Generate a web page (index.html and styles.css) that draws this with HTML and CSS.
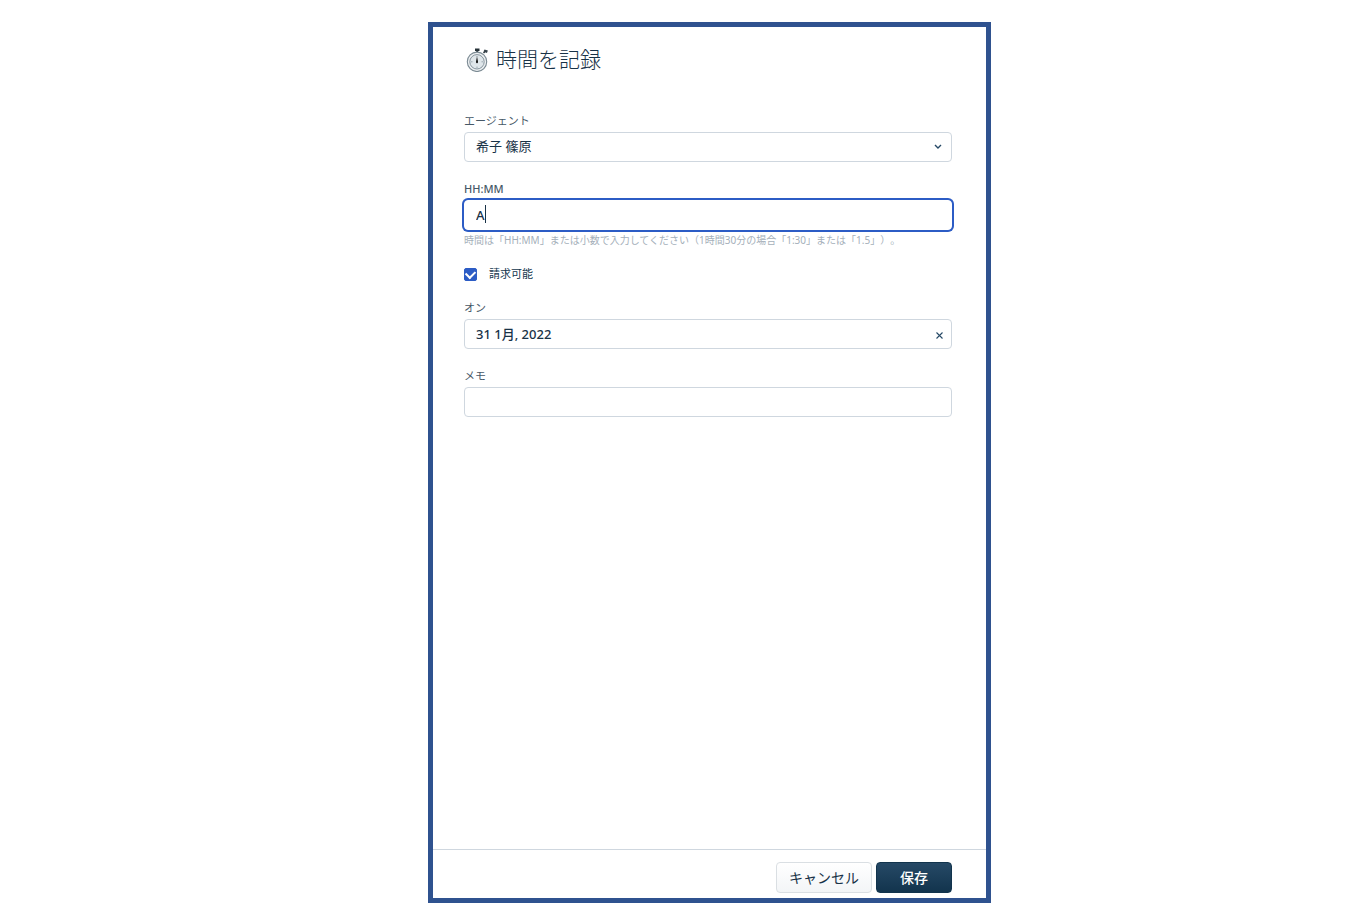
FILE: index.html
```html
<!DOCTYPE html>
<html lang="ja">
<head>
    <meta charset="UTF-8">
    <title>時間を記録</title>
    <link rel="stylesheet" href="styles.css">
</head>
<body>
    <form class="panel">
        <div class="content">
            <h1 class="title">
                <svg class="stopwatch" viewBox="0 0 24 26" width="24" height="26" aria-hidden="true">
                    <path d="M10 2.500h4.500V5h-1.300v2h-2V5H10z" fill="#263238"/>
                    <path d="M18.500 7l2-2" stroke="#263238" stroke-width="1.500"/>
                    <path d="M19.500 3.600l3.400 1-1 2.400-3.400-1.500z" fill="#37434a"/>
                    <circle cx="12" cy="15.800" r="9.700" fill="#eceff1" stroke="#7b8a93" stroke-width="1.100"/>
                    <circle cx="12" cy="15.800" r="7.200" fill="#dfe6ea" stroke="#87959e"/>
                    <path d="M12 10V11M12 20.500v1.500M6 15.800h1.500M16.500 15.800H18" stroke="#9aa7af"/>
                    <path d="M12 10.300l1 5.500a1 1.500 0 0 1-2 0z" fill="#111"/>
                </svg>
                <span>時間を記録</span>
            </h1>

            <div class="field">
                <label for="agent">エージェント</label>
                <div class="control">
                    <select class="input" id="agent">
                        <option>希子 篠原</option>
                    </select>
                    <svg class="chevron" viewBox="0 0 8 6" width="8" height="6" aria-hidden="true">
                        <path d="M1 1l3 3 3-3" fill="none" stroke="#264966" stroke-width="1.400"/>
                    </svg>
                </div>
            </div>

            <div class="field">
                <label class="latin" for="hours">HH:MM</label>
                <div class="control">
                    <input class="input active" type="text" id="hours" value="A" aria-describedby="hours-hint">
                    <span class="caret"></span>
                </div>
                <p class="hint" id="hours-hint">時間は「HH:MM」または小数で入力してください（1時間30分の場合「1:30」または「1.5」）。</p>
            </div>

            <div class="check">
                <input type="checkbox" id="billable" checked>
                <label for="billable">請求可能</label>
            </div>

            <div class="field">
                <label for="date">オン</label>
                <div class="control">
                    <input class="input" type="text" id="date" value="31 1月, 2022">
                    <button class="clear" type="button" aria-label="日付をクリア">
                        <svg viewBox="0 0 7 7" width="7" height="7" aria-hidden="true">
                            <path d="M.5.5l6 6M6.500.5l-6 6" stroke="#264966" stroke-width="1.100"/>
                        </svg>
                    </button>
                </div>
            </div>

            <div class="field">
                <label for="note">メモ</label>
                <input class="input" type="text" id="note">
            </div>
        </div>

        <div class="footer">
            <button class="btn" type="button">キャンセル</button>
            <button class="btn primary" type="button">保存</button>
        </div>
    </form>
</body>
</html>
```

FILE: styles.css
```css
* {
    box-sizing: border-box;
}

body {
    margin: 0;
    min-height: 100vh;
    padding: 22px 0 16px;
    display: grid;
    grid-template-columns: 428fr 563fr 373fr;
    background: #fff;
    color: #12344d;
    font-family: "Noto Sans", "Noto Sans CJK JP", sans-serif;
    font-size: 13px;
    text-spacing-trim: space-all;
}

.panel {
    grid-column: 2;
    display: flex;
    flex-direction: column;
    border: 5px solid #2f528f;
}

.content {
    flex: 1;
    padding: 19px 34px 20px 31px;
}

.title {
    display: flex;
    align-items: center;
    gap: 7px;
    margin: 0 0 41px;
    padding-left: 1px;
    color: #183247;
    font-size: 21px;
    font-weight: 300;
    line-height: 26px;
}

.field {
    margin-bottom: 19px;
}

.field label {
    display: block;
    color: #475867;
    font-size: 11px;
    line-height: 15px;
    margin-bottom: 4px;
}

.field .latin {
    font-weight: 500;
}

.control {
    position: relative;
}

.input {
    display: block;
    width: 100%;
    height: 30px;
    padding: 0 11px 1px;
    border: 1px solid #cfd7df;
    border-radius: 4px;
    background: #fff;
    color: #183247;
    font: inherit;
    font-weight: 500;
    appearance: none;
    outline: none;
}

select.input {
    padding-bottom: 2px;
    font-weight: 400;
}

.active {
    border-color: #fff;
    box-shadow: 0 0 0 2px #2c5cc5;
}

.chevron {
    position: absolute;
    right: 10px;
    top: 12px;
    pointer-events: none;
}

.caret {
    position: absolute;
    left: 21px;
    top: 5px;
    width: 1px;
    height: 18px;
    background: #183247;
}

.clear {
    position: absolute;
    right: 6px;
    top: 8px;
    display: flex;
    align-items: center;
    justify-content: center;
    width: 14px;
    height: 16px;
    padding: 0;
    border: 0;
    background: none;
}

.hint {
    margin: 3px 0 0;
    color: #a5b0ba;
    font-size: 10px;
    line-height: 14px;
}

.check {
    display: flex;
    align-items: center;
    gap: 12px;
    margin-bottom: 18px;
    font-size: 11px;
    line-height: 16px;
}

.check input {
    display: flex;
    align-items: center;
    justify-content: center;
    width: 13px;
    height: 13px;
    margin: 0;
    border-radius: 2px;
    border: 1px solid #2c5cc5;
    appearance: none;
}

.check input:checked {
    background: #2c5cc5;
}

.check input:checked::before {
    content: "";
    width: 7px;
    height: 5px;
    margin-bottom: 2px;
    border: solid #fff;
    border-width: 0 0 2px 2px;
    transform: rotate(-45deg);
}

.footer {
    display: flex;
    justify-content: flex-end;
    gap: 4px;
    padding: 12px 34px 5px;
    border-top: 1px solid #cfd7df;
}

.btn {
    min-width: 76px;
    height: 31px;
    padding: 0 12px 2px;
    border: 1px solid #dadfe3;
    border-radius: 4px;
    background: linear-gradient(#fff, #f3f5f7);
    color: #183247;
    font: inherit;
    font-size: 14px;
}

.primary {
    border-color: #12344d;
    background: linear-gradient(#264966, #12344d);
    color: #fff;
    font-weight: 500;
}
```
